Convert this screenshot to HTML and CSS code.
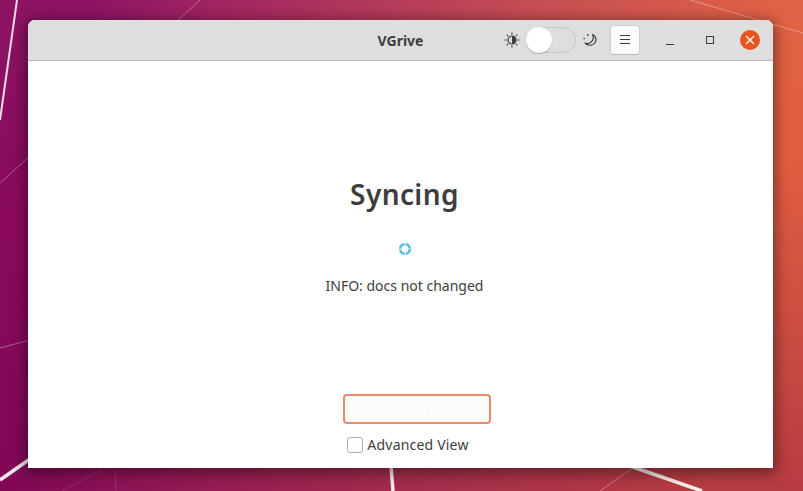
FILE: index.html
```html
<!DOCTYPE html>
<html lang="en">
<head>
<meta charset="utf-8">
<title>VGrive</title>
<link rel="stylesheet" href="styles.css">
</head>
<body>
<div class="desktop">
  <svg class="wall-lines" width="803" height="491" viewBox="0 0 803 491">
    <path class="line-strong" d="M17 0L0 120"/>
    <path class="line-thick" d="M0 480L30 459"/>
    <path class="line-thick" d="M391 466L393 491"/>
    <path class="line-thick" d="M633 467L702 491"/>
    <path class="line-faint" d="M0 183L30 156"/>
    <path class="line-faint" d="M0 348L30 340"/>
    <path class="line-faint" d="M176 22L200 0"/>
    <path class="line-faint" d="M690 0L803 33"/>
    <path class="line-faint" d="M600 491L634 467"/>
    <path class="line-dim" d="M62 491L102 470"/>
    <path class="line-dim" d="M115 470L116 491"/>
  </svg>
  <main class="window">
    <header class="titlebar">
      <h1 class="title">VGrive</h1>
      <div class="controls">
        <svg class="icon sun" width="16" height="16" viewBox="0 0 16 16">
          <circle cx="8" cy="8" r="4" fill="none" stroke="#3d3d3d" stroke-width="1.200"/>
          <path d="M8 4a4 4 0 0 1 0 8z" fill="#3d3d3d"/>
          <path d="M8 .5v2M8 13.500v2M.5 8h2M13.500 8h2M2.700 2.700l1.400 1.400M11.900 11.900l1.400 1.400M2.700 13.300l1.400-1.400M11.900 4.100l1.400-1.400" stroke="#3d3d3d" stroke-width="1.100" fill="none"/>
        </svg>
        <div class="switch"><span class="knob"></span></div>
        <svg class="icon moon" width="16" height="16" viewBox="0 0 16 16">
          <path d="M10.500 2.500a6 6 0 0 1-7.500 8.500a6.300 6.300 0 0 0 11-3a6 6 0 0 0-3.500-5.500z" fill="none" stroke="#3d3d3d" stroke-width="1.200" stroke-linejoin="round"/>
          <path d="M5 3h1.600M5.800 2.200v1.600M1.500 6.500h1.400M2.200 5.800v1.400" stroke="#3d3d3d" stroke-width=".9" fill="none"/>
        </svg>
        <button class="menu-btn" type="button" aria-label="Menu">
          <svg width="12" height="10" viewBox="0 0 12 10"><path d="M1 .5h10M1 4.500h10M1 8.500h10" stroke="#3d3d3d" stroke-width="1" fill="none"/></svg>
        </button>
        <div class="win-buttons">
          <span class="win-btn"><svg width="16" height="16" viewBox="0 0 16 16"><path d="M4 12.500h8" stroke="#3d3d3d" stroke-width="1" fill="none"/></svg></span>
          <span class="win-btn"><svg width="16" height="16" viewBox="0 0 16 16"><rect x="4.500" y="4.500" width="7" height="7" stroke="#3d3d3d" stroke-width="1" fill="none"/></svg></span>
          <span class="close-btn"><svg width="10" height="10" viewBox="0 0 10 10"><path d="M1 1l8 8M9 1l-8 8" stroke="#fff" stroke-width="1.300" fill="none"/></svg></span>
        </div>
      </div>
    </header>
    <section class="content">
      <h2 class="heading">Syncing</h2>
      <svg class="spinner" width="16" height="16" viewBox="0 0 16 16">
        <circle cx="8" cy="8" r="4.800" fill="none" stroke="#55bde6" stroke-width="2.400" stroke-dasharray="6.500 1"/>
      </svg>
      <p class="status">INFO: docs not changed</p>
      <button class="stop-btn" type="button">Stop</button>
      <label class="advanced"><span class="checkbox"></span>Advanced View</label>
    </section>
  </main>
</div>
</body>
</html>
```
FILE: styles.css
```css
* { box-sizing: border-box; }
html, body { margin: 0; height: 100%; overflow: hidden; }
body { font-family: "Noto Sans", "Open Sans", sans-serif; color: #3d3d3d; }

.desktop {
  position: relative;
  width: 803px;
  height: 491px;
  overflow: hidden;
  background: linear-gradient(100deg, #880a5c 0%, #8a0a5d 10%, #a4245a 30%, #c4484e 60%, #e05e40 88%, #e4603f 100%);
}
.desktop::after {
  content: "";
  position: absolute;
  inset: 0;
  background: linear-gradient(175deg, rgba(255,255,255,.04) 0%, rgba(120,0,60,0) 40%, rgba(110,0,70,.38) 100%);
  pointer-events: none;
}
.wall-lines { position: absolute; inset: 0; z-index: 1; }
.wall-lines path { fill: none; stroke: #fff; }
.line-strong { stroke-width: 2; opacity: .85; }
.line-thick { stroke-width: 3.500; opacity: .9; }
.line-faint { stroke-width: 1; opacity: .35; }
.line-dim { stroke-width: 1; opacity: .12; }

.window {
  position: absolute;
  z-index: 2;
  left: 28px;
  top: 20px;
  width: 745px;
  height: 448px;
  display: flex;
  flex-direction: column;
  background: #fff;
  border-radius: 7px 7px 0 0;
  box-shadow: 0 3px 14px 3px rgba(0,0,0,.42);
}

.titlebar {
  position: relative;
  flex: none;
  height: 41px;
  display: flex;
  align-items: center;
  justify-content: flex-end;
  background: #dedede;
  border-bottom: 1px solid #b6b6b3;
  border-radius: 7px 7px 0 0;
}
.title {
  position: absolute;
  left: 0;
  right: 0;
  margin: 0;
  text-align: center;
  font-size: 14px;
  font-weight: 700;
  color: #3d3d3d;
}
.controls { display: flex; align-items: center; padding-right: 13px; position: relative; }
.icon { display: block; flex: none; }
.switch {
  width: 50px;
  height: 26px;
  margin: 0 6px;
  border: 1px solid #c5c5c3;
  border-radius: 13px;
  background: #dedede;
  position: relative;
}
.knob {
  position: absolute;
  left: -1px;
  top: -1px;
  width: 26px;
  height: 26px;
  border-radius: 50%;
  background: #fff;
  box-shadow: 0 1px 1px #aaa;
}
.menu-btn {
  width: 30px;
  height: 30px;
  margin-left: 12px;
  padding: 0;
  display: flex;
  align-items: center;
  justify-content: center;
  background: #fbfbfb;
  border: 1px solid #cfcfcd;
  border-bottom-color: #bdbdbb;
  border-radius: 4px;
}
.win-buttons { display: flex; align-items: center; margin-left: 22px; }
.win-btn { width: 16px; height: 16px; margin-right: 24px; display: block; }
.win-btn svg, .close-btn svg { display: block; }
.close-btn {
  width: 20px;
  height: 20px;
  margin-left: -2px;
  border-radius: 50%;
  background: #e9541f;
  display: flex;
  align-items: center;
  justify-content: center;
}

.content {
  flex: 1;
  display: flex;
  flex-direction: column;
  align-items: center;
  padding: 114px 0 0 8px;
}
.heading {
  margin: 0;
  font-size: 28px;
  letter-spacing: .4px;
  line-height: 38px;
  font-weight: 600;
  color: #3d3d3d;
}
.spinner { display: block; margin-top: 28px; }
.status {
  margin: 19px 0 0;
  font-size: 14px;
  line-height: 20px;
  color: #3d3d3d;
}
.stop-btn {
  margin: 98px 0 0 25px;
  width: 148px;
  height: 30px;
  padding: 0;
  font: 14px "Noto Sans", sans-serif;
  color: #fff;
  background: #fbfbfb;
  border: 2px solid #e58a6d;
  border-radius: 4px;
}
.advanced {
  margin: 11px 0 0 7px;
  display: flex;
  align-items: center;
  gap: 4px;
  font-size: 14px;
  letter-spacing: .2px;
  line-height: 20px;
  color: #3d3d3d;
}
.checkbox {
  width: 16px;
  height: 16px;
  background: #fdfdfd;
  border: 1px solid #aeaeac;
  border-radius: 3px;
}
```
